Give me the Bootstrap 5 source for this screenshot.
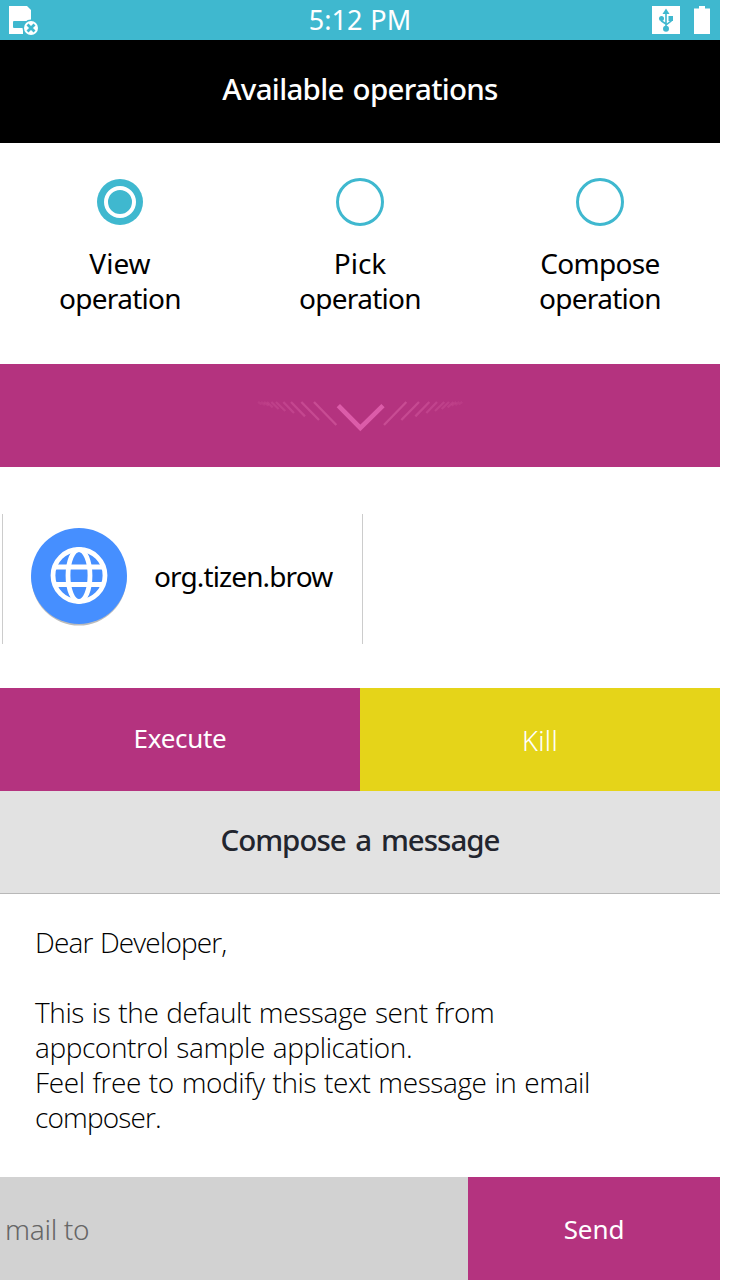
<!DOCTYPE html>
<html lang="en">
<head>
<meta charset="utf-8">
<meta name="viewport" content="width=device-width, initial-scale=1">
<title>Available operations</title>
<link href="https://cdn.jsdelivr.net/npm/bootstrap@5.3.0/dist/css/bootstrap.min.css" rel="stylesheet">
<style>
body{background:#fff;color:#000;font-family:"Noto Sans","Open Sans",sans-serif;font-size:28px;line-height:35px;overflow:hidden}
.screen{width:720px;height:1280px}
.statusbar{height:40px;background:#3fb8cf;padding:0 8px}
.statusbar .side{width:70px}
.clock{font-weight:400;font-size:27px;letter-spacing:0;word-spacing:1px;padding-bottom:1px}
.titlebar{height:103px;font-size:29.5px;font-weight:500;padding-bottom:6px}
.titlebar-black{background:#000;color:#fff;letter-spacing:-.7px;word-spacing:2px}
.titlebar-gray{background:#e2e2e2;color:#22252e;border-bottom:1px solid #b8b8b8;letter-spacing:-1px;word-spacing:3px}
.choices{height:221px;padding-top:35px}
.choices svg{display:block;margin:0 auto 20px}
.choices .tight{letter-spacing:-.7px}
.magenta,.magenta:hover{background:#b4337f;color:#fff}
.yellow,.yellow:hover{background:#e5d419;color:#fff}
.bar{height:103px;padding-top:21px}
.applist{height:221px;padding:47px 0 44px 2px}
.appitem{width:361px;height:130px;border-left:1px solid #ccc;border-right:1px solid #ccc;padding:0 0 4px 28px;gap:26px}
.appname{letter-spacing:-.88px;padding-bottom:1px}
.flatbtn{border:0;border-radius:0;height:103px;font-weight:400;font-size:26px;padding:0 0 2px;letter-spacing:-.3px}
.message{height:283px;padding:31px 35px 0;font-family:"Open Sans","Noto Sans",sans-serif;font-weight:300;letter-spacing:-.4px;word-spacing:1px}
.message .tight{letter-spacing:-.85px}
.message span,.choices span,.fit{white-space:nowrap}
.mailto{width:468px;border:0;border-radius:0;background:#d2d2d2;height:103px;padding:0 5px;font-size:28px;font-weight:300;letter-spacing:-.3px}
.mailto::placeholder{color:#666;opacity:1}
.flatbtn.yellow{font-weight:300;font-size:27px;letter-spacing:.3px;padding:3px 0 0}
.flatbtn.send{width:252px;padding:1px 0 0;letter-spacing:-.1px}
</style>
</head>
<body>
<main class="screen d-flex flex-column">
<header class="statusbar d-flex align-items-center justify-content-between text-white">
<div class="side"><svg class="d-block" width="32" height="40" viewBox="8 0 32 40"><path fill="#fff" d="M9 6H27L31 10V21H14Q13 21 13 22V27Q13 28 14 28H23V34H9Z"/><circle cx="31" cy="28" r="8.5" fill="#3fb8cf"/><circle cx="31" cy="28" r="7" fill="#fff"/><path d="M27.500 24.500l7 7m0-7l-7 7" stroke="#3fb8cf" stroke-width="2.800"/></svg></div>
<span class="clock fit">5:12 PM</span>
<div class="side d-flex justify-content-end"><svg class="d-block" width="60" height="40" viewBox="652 0 60 40"><path fill="#fff" d="M652 6h28v28h-28z"/><g fill="#3fb8cf"><path d="M666 8.500l-3.500 5.500h7z"/><circle cx="666" cy="28.700" r="3"/><circle cx="661.500" cy="18.500" r="2.500"/><path d="M668.500 16h4.500v5h-4.500z"/></g><path d="M666 13v15M661.500 19v2l4.500 3M671 20v1l-5 4" fill="none" stroke="#3fb8cf" stroke-width="1.600"/><path fill="#fff" d="M699 6h6v2.500h5V34h-16V8.500h5z"/></svg></div>
</header>
<div class="titlebar titlebar-black d-flex align-items-center justify-content-center"><span class="fit">Available operations</span></div>
<section class="choices row g-0 text-center">
<div class="col-4"><svg width="48" height="48"><circle cx="24" cy="24" r="23" fill="#3fb8cf"/><circle cx="24" cy="24" r="14" fill="none" stroke="#fff" stroke-width="4"/></svg><span>View</span><br><span class="tight">operation</span></div>
<div class="col-4"><svg width="48" height="48"><circle cx="24" cy="24" r="22.500" fill="none" stroke="#3fb8cf" stroke-width="3"/></svg><span>Pick</span><br><span class="tight">operation</span></div>
<div class="col-4"><svg width="48" height="48"><circle cx="24" cy="24" r="22.500" fill="none" stroke="#3fb8cf" stroke-width="3"/></svg><span class="tight">Compose</span><br><span class="tight">operation</span></div>
</section>
<div class="bar magenta d-flex justify-content-center"><svg width="240" height="60" viewBox="0 0 720 180" fill="none"><g id="rays" stroke="#ca4f96" stroke-width="7"><path d="M222 51l67 69" opacity=".9"/><path d="M184 51l53 54" opacity=".8"/><path d="M153 51l42 43" opacity=".7"/><path d="M130 51l32 33" opacity=".6"/><path d="M108 51l28 27" opacity=".5"/><path d="M94 51l22 21" opacity=".45"/><path d="M81 51l17 16" opacity=".4"/><path d="M72 51l14 11" opacity=".35"/><path d="M63 51l12 9M54 51l11 7" opacity=".3"/></g><use href="#rays" transform="matrix(-1 0 0 1 721 0)"/><path d="M295 62l66 67 68-67" stroke="#dc5ca9" stroke-width="14"/></svg></div>
<section class="applist">
<div class="appitem d-flex align-items-center"><svg width="97" height="100" viewBox="0.500 0 97 100"><circle cx="48.500" cy="51" r="47.500" fill="#bbb"/><circle cx="48.500" cy="49" r="48" fill="#468fff"/><g fill="none" stroke="#fff" stroke-width="4.800"><circle cx="48.500" cy="48.500" r="26"/><ellipse cx="48.500" cy="48.500" rx="11" ry="26"/><path d="M24 40h49M24 57.500h49"/></g></svg><span class="fit appname">org.tizen.brow</span></div>
</section>
<div class="d-flex"><button class="btn flatbtn magenta w-50">Execute</button><button class="btn flatbtn yellow w-50">Kill</button></div>
<div class="titlebar titlebar-gray d-flex align-items-center justify-content-center"><span class="fit">Compose a message</span></div>
<div class="message"><span class="tight">Dear Developer,</span><br><br><span>This is the default message sent from</span><br><span>appcontrol sample application.</span><br><span>Feel free to modify this text message in email</span><br><span class="tight">composer.</span></div>
<div class="d-flex"><input class="form-control mailto" placeholder="mail to"><button class="btn flatbtn magenta send">Send</button></div>
</main>
<script src="https://cdn.jsdelivr.net/npm/bootstrap@5.3.0/dist/js/bootstrap.bundle.min.js"></script>
</body>
</html>
